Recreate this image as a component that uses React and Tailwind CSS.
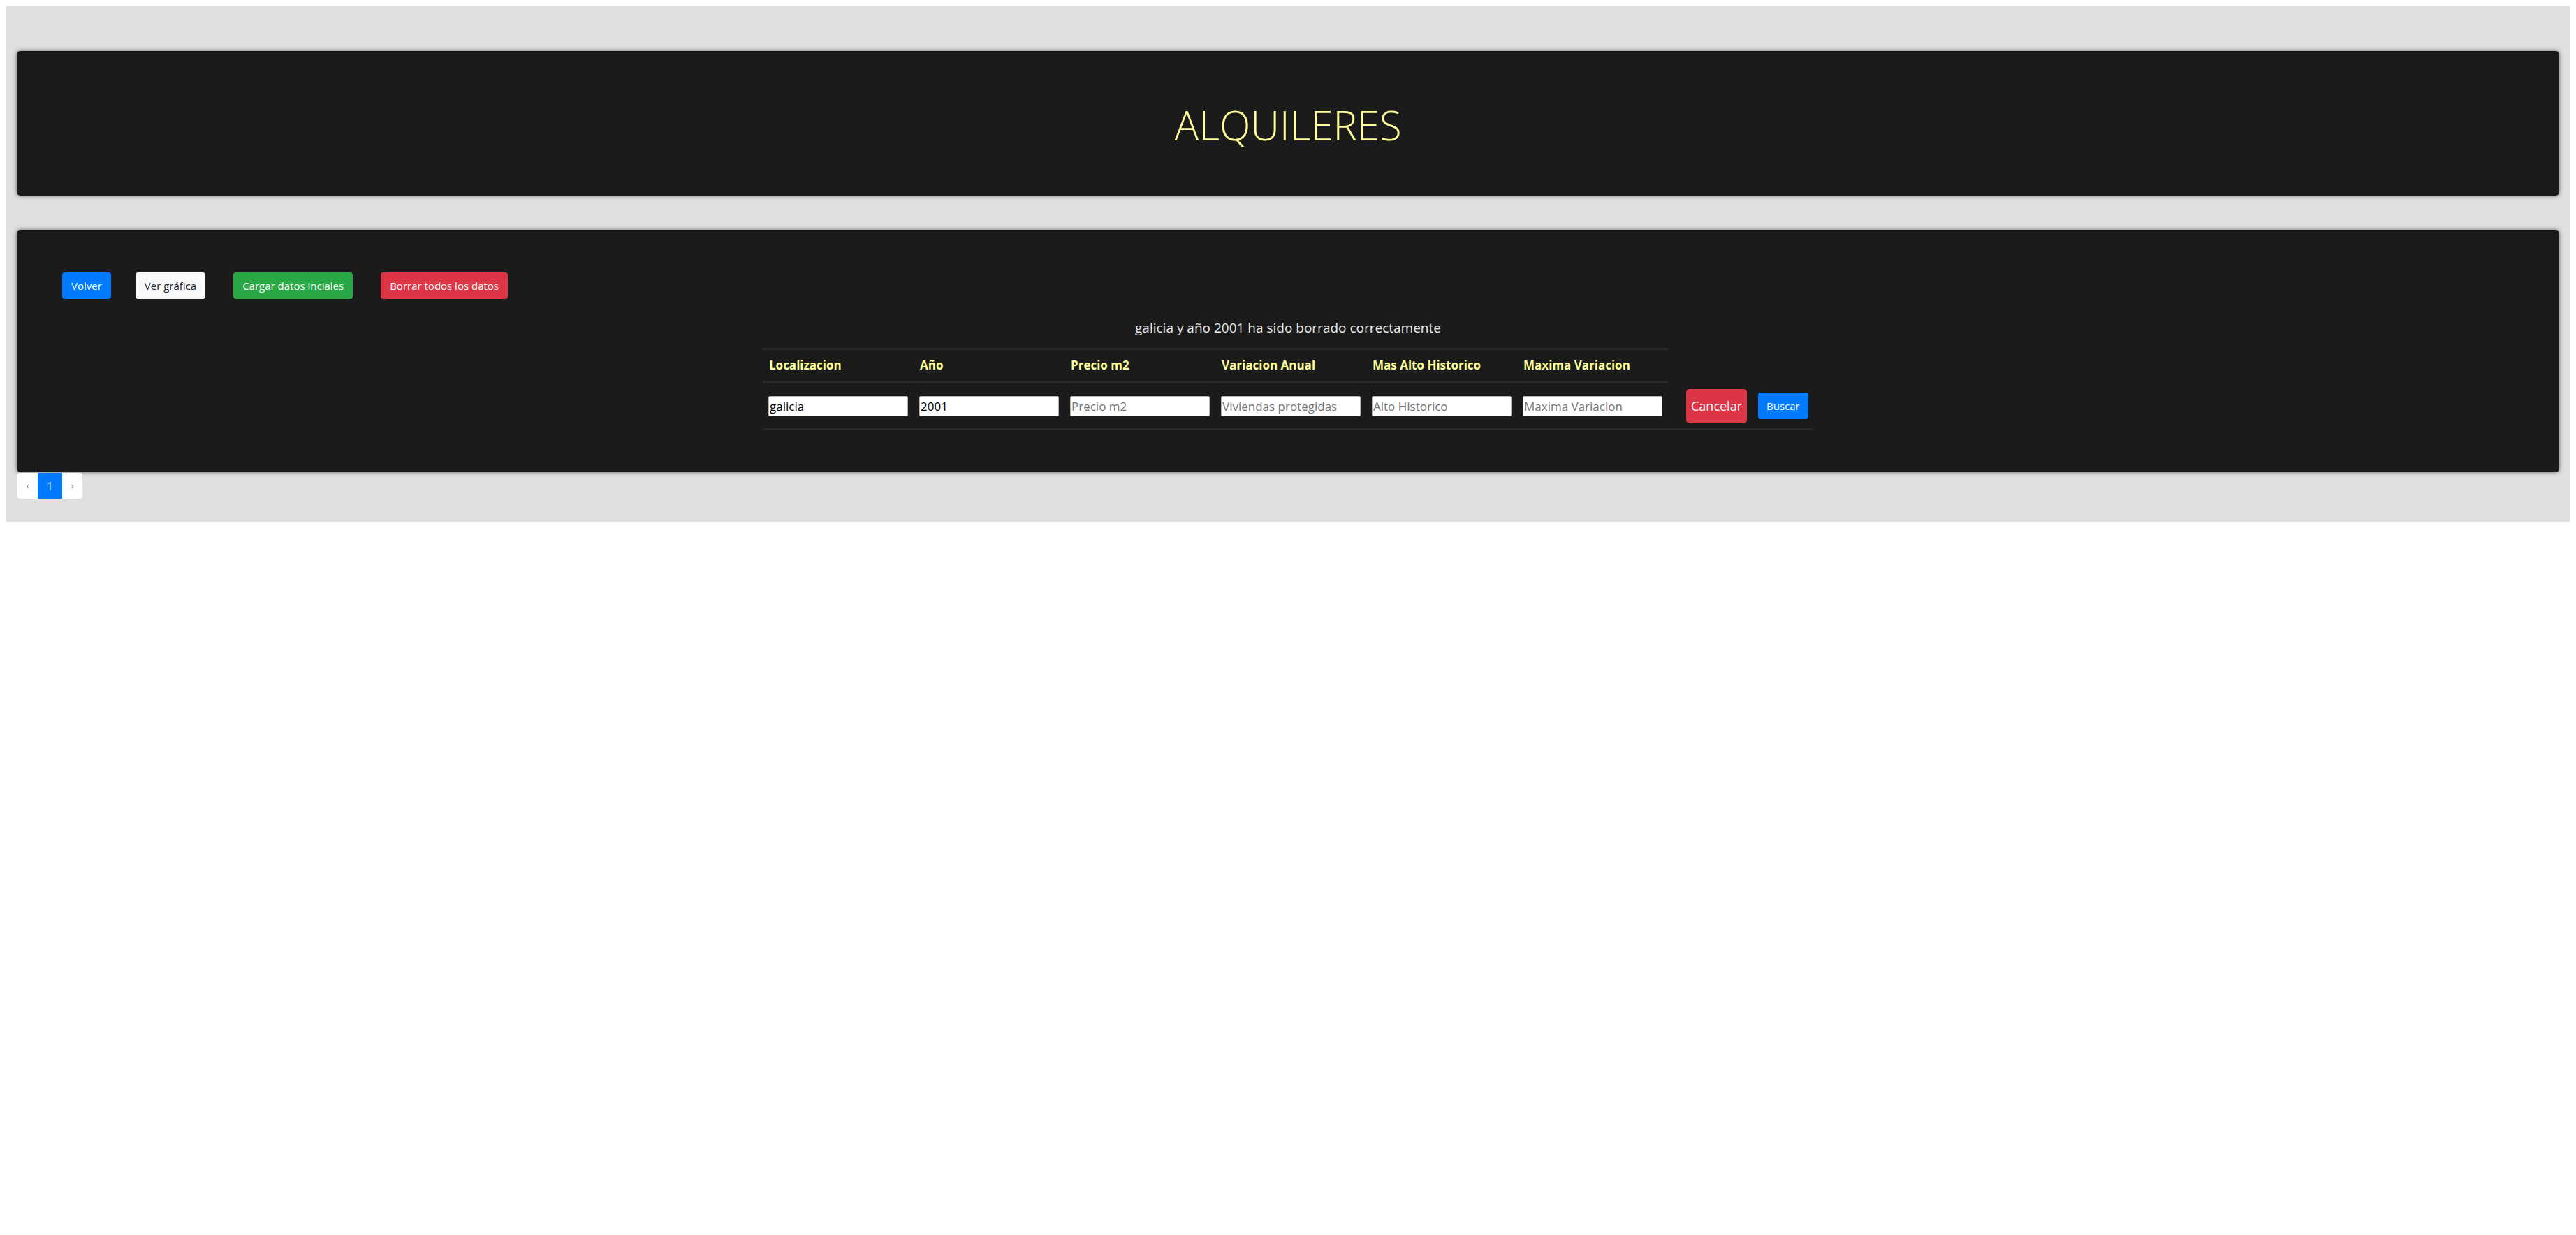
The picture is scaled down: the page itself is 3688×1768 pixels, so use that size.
import React from "react";

const columns = [
  { label: "Localizacion", value: "galicia", placeholder: "Localizacion" },
  { label: "Año", value: "2001", placeholder: "Año" },
  { label: "Precio m2", value: "", placeholder: "Precio m2" },
  { label: "Variacion Anual", value: "", placeholder: "Viviendas protegidas" },
  { label: "Mas Alto Historico", value: "", placeholder: "Alto Historico" },
  { label: "Maxima Variacion", value: "", placeholder: "Maxima Variacion" },
];

export default function App() {
  return (
    <div className="p-2 font-['Open_Sans',sans-serif]">
      <div className="bg-[#e0e0e0] px-4 pt-[65px] pb-[33px]">
        {/* title card */}
        <header className="flex h-[207px] items-center justify-center rounded-[5px] bg-[#1b1b1b] pt-1 shadow-[0_0_6px_rgba(0,0,0,0.55)]">
          <h1 className="text-[58px] font-light leading-none text-[#ffff99]">
            ALQUILERES
          </h1>
        </header>

        {/* data card */}
        <section className="mt-[49px] rounded-[5px] bg-[#1b1b1b] pt-[61px] pb-[60px] shadow-[0_0_6px_rgba(0,0,0,0.55)]">
          <div className="flex pl-[65px]">
            <button className="h-[38px] rounded-[4px] bg-[#007bff] px-[13px] text-[15px] text-white">
              Volver
            </button>
            <button className="ml-[35px] h-[38px] rounded-[4px] bg-[#f8f9fa] px-[13px] text-[15px] text-[#212529]">
              Ver gráfica
            </button>
            <button className="ml-[40px] h-[38px] rounded-[4px] bg-[#28a745] px-[13px] text-[15px] text-white">
              Cargar datos inciales
            </button>
            <button className="ml-[40px] h-[38px] rounded-[4px] bg-[#dc3545] px-[13px] text-[15px] text-white">
              Borrar todos los datos
            </button>
          </div>

          <p className="mt-[27px] h-[28px] text-center text-[19px] leading-[28px] text-[#e8e8e8]">
            galicia y año 2001 ha sido borrado correctamente
          </p>

          {/* search table */}
          <div className="mx-auto mt-[15px] w-[1504px]">
            <div className="flex h-[51px] w-[1296px] items-center border-t-[3px] border-b-[4px] border-[#2a2a2a]">
              {columns.map((c) => (
                <div
                  key={c.label}
                  className="w-[216px] px-[9px] text-[17px] font-bold text-[#ffff99]"
                >
                  {c.label}
                </div>
              ))}
            </div>
            <div className="flex h-[67px] items-center border-b-[3px] border-[#2a2a2a]">
              {columns.map((c) => (
                <div key={c.label} className="w-[216px] px-2">
                  <input
                    defaultValue={c.value}
                    placeholder={c.placeholder}
                    className="h-[29px] w-[200px] rounded-[2px] border border-[#b5b5b5] bg-white px-px text-[17px] text-black outline-none placeholder:text-[#757575]"
                  />
                </div>
              ))}
              <div className="flex w-[208px] items-center gap-4 pl-[26px] pr-2">
                <button className="h-[49px] rounded-[5px] bg-[#dc3545] px-[7px] text-[18px] text-white">
                  Cancelar
                </button>
                <button className="h-[38px] rounded-[4px] bg-[#007bff] px-[12px] text-[15px] text-white">
                  Buscar
                </button>
              </div>
            </div>
          </div>
        </section>

        {/* pagination */}
        <div className="mt-px flex pl-px">
          <div className="flex h-[37px] overflow-hidden rounded-[4px] bg-white">
            <span className="flex w-[29px] items-center justify-center text-[12px] text-[#6c757d]">
              ‹
            </span>
            <span className="flex w-[35px] items-center justify-center bg-[#007bff] text-[16px] font-light text-white">
              1
            </span>
            <span className="flex w-[29px] items-center justify-center text-[12px] text-[#6c757d]">
              ›
            </span>
          </div>
        </div>
      </div>
    </div>
  );
}
